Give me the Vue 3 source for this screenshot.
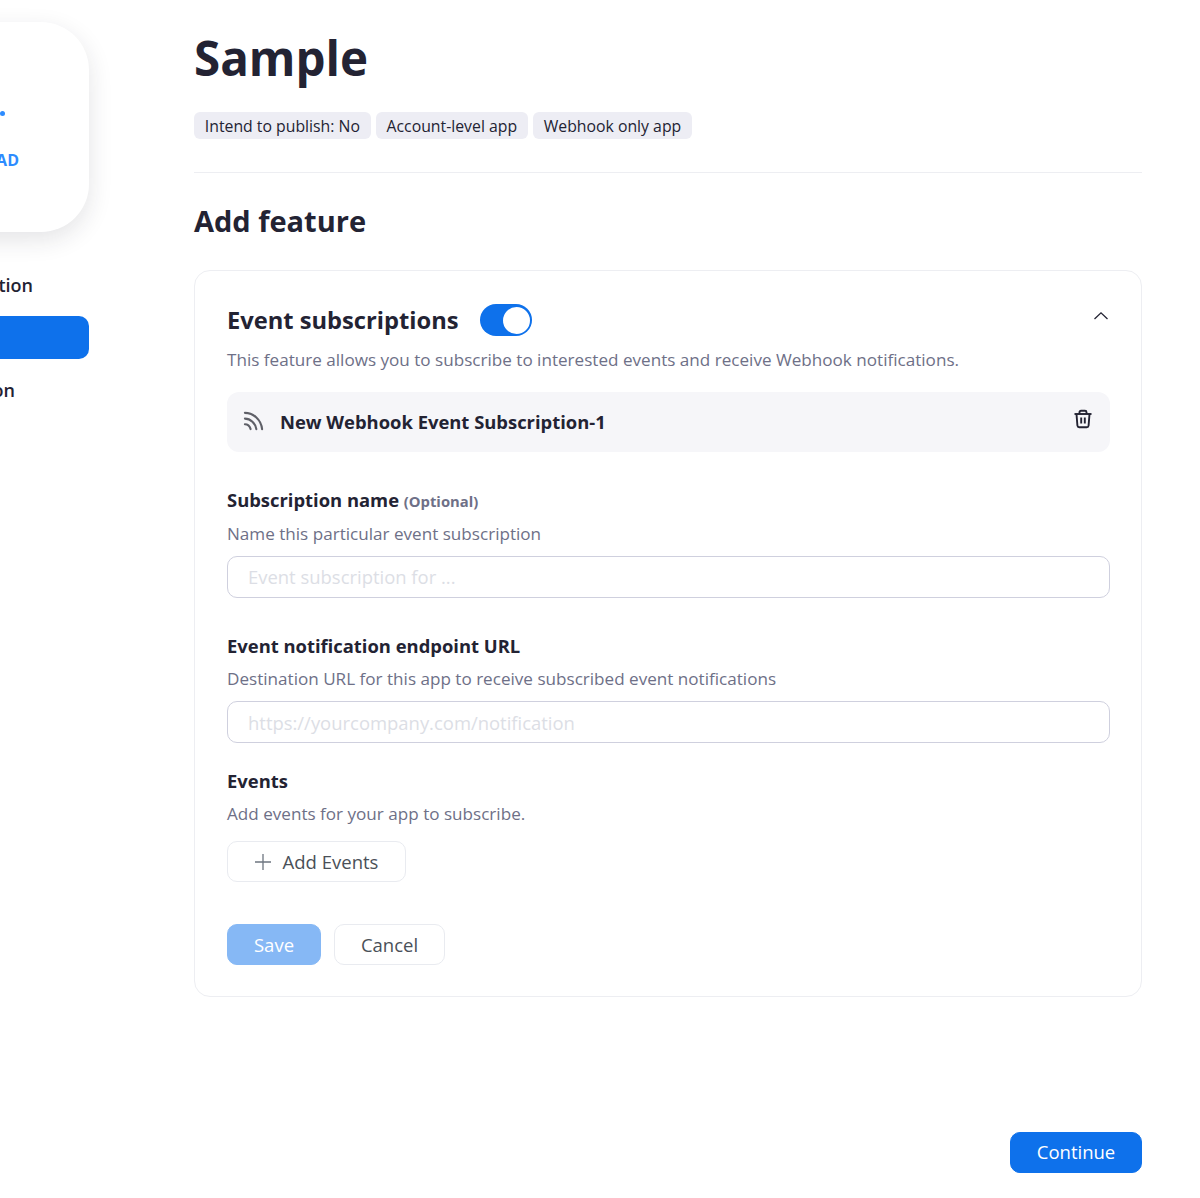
<template>
  <div class="page">
    <aside class="sidebar">
      <div class="logo-card">
        <div class="logo-dot"></div>
        <span class="logo-upload">UPLOAD</span>
      </div>
      <nav class="side-nav">
        <a class="side-link side-link--info">Basic Information</a>
        <a class="side-link side-link--active"></a>
        <a class="side-link side-link--last">Activation</a>
      </nav>
    </aside>

    <main class="content">
      <h1 class="title">Sample</h1>
      <div class="tags">
        <span v-for="tag in tags" :key="tag" class="tag">{{ tag }}</span>
      </div>
      <div class="divider"></div>
      <h2 class="subtitle">Add feature</h2>

      <section class="card">
        <div class="card__head">
          <h3>Event subscriptions</h3>
          <span class="switch"><span class="switch__knob"></span></span>
          <svg class="chevron" viewBox="0 0 16 16" aria-hidden="true">
            <path d="M1.5 11 8 4.8 14.5 11" fill="none" stroke="currentColor" stroke-width="1.3" />
          </svg>
        </div>
        <p class="card__desc">This feature allows you to subscribe to interested events and receive Webhook notifications.</p>

        <div class="sub-row">
          <svg class="rss" viewBox="0 0 22 22" aria-hidden="true">
            <g fill="none" stroke="currentColor" stroke-width="2.2" stroke-linecap="round">
              <path d="M2 3c9 0 17 7 18 17" />
              <path d="M2 9c6 0 11 5 12 11" />
              <path d="M2 15c3 0 5 2 6 5" />
            </g>
          </svg>
          <span class="sub-row__name">New Webhook Event Subscription-1</span>
          <svg class="trash" viewBox="0 0 20 20" aria-hidden="true">
            <g fill="none" stroke="currentColor" stroke-width="1.9">
              <path d="M1.5 5h17" />
              <path d="M6.5 5V3.200c0-.9.6-1.500 1.500-1.500h4c.9 0 1.500.6 1.500 1.500V5" />
              <path d="M3.500 5l.9 11.500c.1 1 .8 1.700 1.800 1.700h7.600c1 0 1.700-.7 1.800-1.700L16.500 5" />
              <path d="M8.200 8.500v6M11.800 8.500v6" />
            </g>
          </svg>
        </div>

        <div class="field field--first">
          <label>Subscription name <small>(Optional)</small></label>
          <p>Name this particular event subscription</p>
          <input type="text" placeholder="Event subscription for ..." />
        </div>

        <div class="field field--second">
          <label>Event notification endpoint URL</label>
          <p>Destination URL for this app to receive subscribed event notifications</p>
          <input type="text" placeholder="https://yourcompany.com/notification" />
        </div>

        <div class="field field--third">
          <label>Events</label>
          <p>Add events for your app to subscribe.</p>
          <button class="btn btn--add" type="button">
            <svg viewBox="0 0 16 16" aria-hidden="true">
              <path d="M8 0v16M0 8h16" fill="none" stroke="currentColor" stroke-width="1.3" />
            </svg>
            Add Events
          </button>
        </div>

        <div class="actions">
          <button class="btn btn--save" type="button">Save</button>
          <button class="btn btn--cancel" type="button">Cancel</button>
        </div>
      </section>

      <div class="footer">
        <button class="btn btn--continue" type="button">Continue</button>
      </div>
    </main>
  </div>
</template>

<script setup>
const tags = ['Intend to publish: No', 'Account-level app', 'Webhook only app']
</script>

<style>
html, body { margin: 0; background: #fff; }
</style>

<style scoped>
.page { display: flex; width: 1200px; height: 1198px; overflow: hidden; font-family: "Open Sans", "Noto Sans", sans-serif; color: #232333; }
* { box-sizing: border-box; }

/* sidebar runs off the left edge */
.sidebar { flex: 0 0 240px; margin-left: -151px; padding-top: 22px; }
.logo-card { position: relative; height: 210px; background: #fff; border-radius: 48px; box-shadow: 0 8px 24px rgba(35, 35, 51, 0.12); }
.logo-dot { position: absolute; right: 84px; top: 89px; width: 5px; height: 5px; border-radius: 50%; background: #2d8cff; }
.logo-upload { position: absolute; right: 70px; top: 127px; color: #2d8cff; font-size: 16px; font-weight: 700; line-height: 22px; }
.side-nav { display: flex; flex-direction: column; margin-top: 31px; }
.side-link { height: 43px; line-height: 43px; font-size: 18px; font-weight: 600; text-align: right; white-space: nowrap; }
.side-link--info { padding-right: 56px; padding-top: 1px; }
.side-link--active { margin-top: 10px; margin-bottom: 10px; background: #0e71eb; border-radius: 10px; }
.side-link--last { padding-right: 74px; }

.content { flex: 0 0 948px; margin-left: 105px; display: flex; flex-direction: column; }
.title { margin: 27px 0 0; font-size: 47.500px; line-height: 62px; font-weight: 700; }
.tags { display: flex; gap: 5px; margin-top: 23px; }
.tag { height: 27px; padding: 1px 10.800px 0; line-height: 27px; font-size: 15.800px; background: #ededf4; border-radius: 6px; color: #232333; }
.divider { height: 1px; margin-top: 33px; background: #edeef2; }
.subtitle { margin: 27px 0 0; font-size: 29px; line-height: 42px; font-weight: 700; }

.card { margin-top: 28px; height: 727px; padding: 32px 31px 0 32px; border: 1px solid #edeef2; border-radius: 16px; }
.card__head { display: flex; align-items: center; height: 34px; }
.card__head h3 { margin: 0; font-size: 23.700px; line-height: 34px; font-weight: 700; }
.switch { display: flex; justify-content: flex-end; align-items: center; width: 52px; height: 32px; margin-left: 21px; padding-right: 2px; border-radius: 16px; background: #0e71eb; }
.switch__knob { width: 27px; height: 27px; border-radius: 50%; background: #fff; }
.chevron { width: 16px; height: 16px; margin-left: auto; margin-right: 1px; margin-top: -8px; color: #232333; }
.card__desc { margin: 10px 0 0; font-size: 17.100px; line-height: 26px; color: #6e7087; }

.sub-row { display: flex; align-items: center; height: 60px; margin-top: 19px; padding: 0 17px 0 16px; background: #f6f6f9; border-radius: 12px; }
.rss { width: 21px; height: 21px; margin-top: -4px; color: #5f6068; }
.sub-row__name { margin: -2px 0 0 16px; font-size: 18.400px; font-weight: 700; }
.trash { width: 20px; height: 20px; margin-left: auto; margin-top: -6px; }

.field label { display: block; font-size: 18.400px; line-height: 26px; font-weight: 700; }
.field label small { font-size: 14.800px; font-weight: 700; color: #6e7087; }
.field p { margin: 7px 0 0; font-size: 17.100px; line-height: 26px; color: #6e7087; }
.field input { display: block; width: 100%; height: 42px; margin-top: 9px; padding: 0 20px 1px; border: 1px solid #cfd0de; border-radius: 10px; font: 18.450px "Open Sans", sans-serif; outline: none; }
.field input::placeholder { color: #dcdee5; opacity: 1; }
.field--first { margin-top: 35px; }
.field--second { margin-top: 35px; }
.field--second input { padding: 1px 20px 0; }
.field--third { margin-top: 25px; }

.btn { display: inline-flex; align-items: center; justify-content: center; height: 41px; padding-bottom: 1px; border-radius: 10px; border: 1px solid #e9ebf0; background: #fff; font: 18.500px "Open Sans", sans-serif; color: #4a5058; }
.btn--add { width: 179px; margin-top: 14px; gap: 12px; }
.btn--add svg { width: 16px; height: 16px; color: #6e7680; }
.actions { display: flex; gap: 13px; margin-top: 42px; }
.btn--save { width: 94px; background: #86b8f5; border-color: #86b8f5; color: #fff; }
.btn--cancel { width: 111px; }
.footer { display: flex; justify-content: flex-end; margin-top: 135px; }
.btn--continue { width: 132px; padding-bottom: 3px; background: #0e71eb; border-color: #0e71eb; color: #fff; }
</style>
